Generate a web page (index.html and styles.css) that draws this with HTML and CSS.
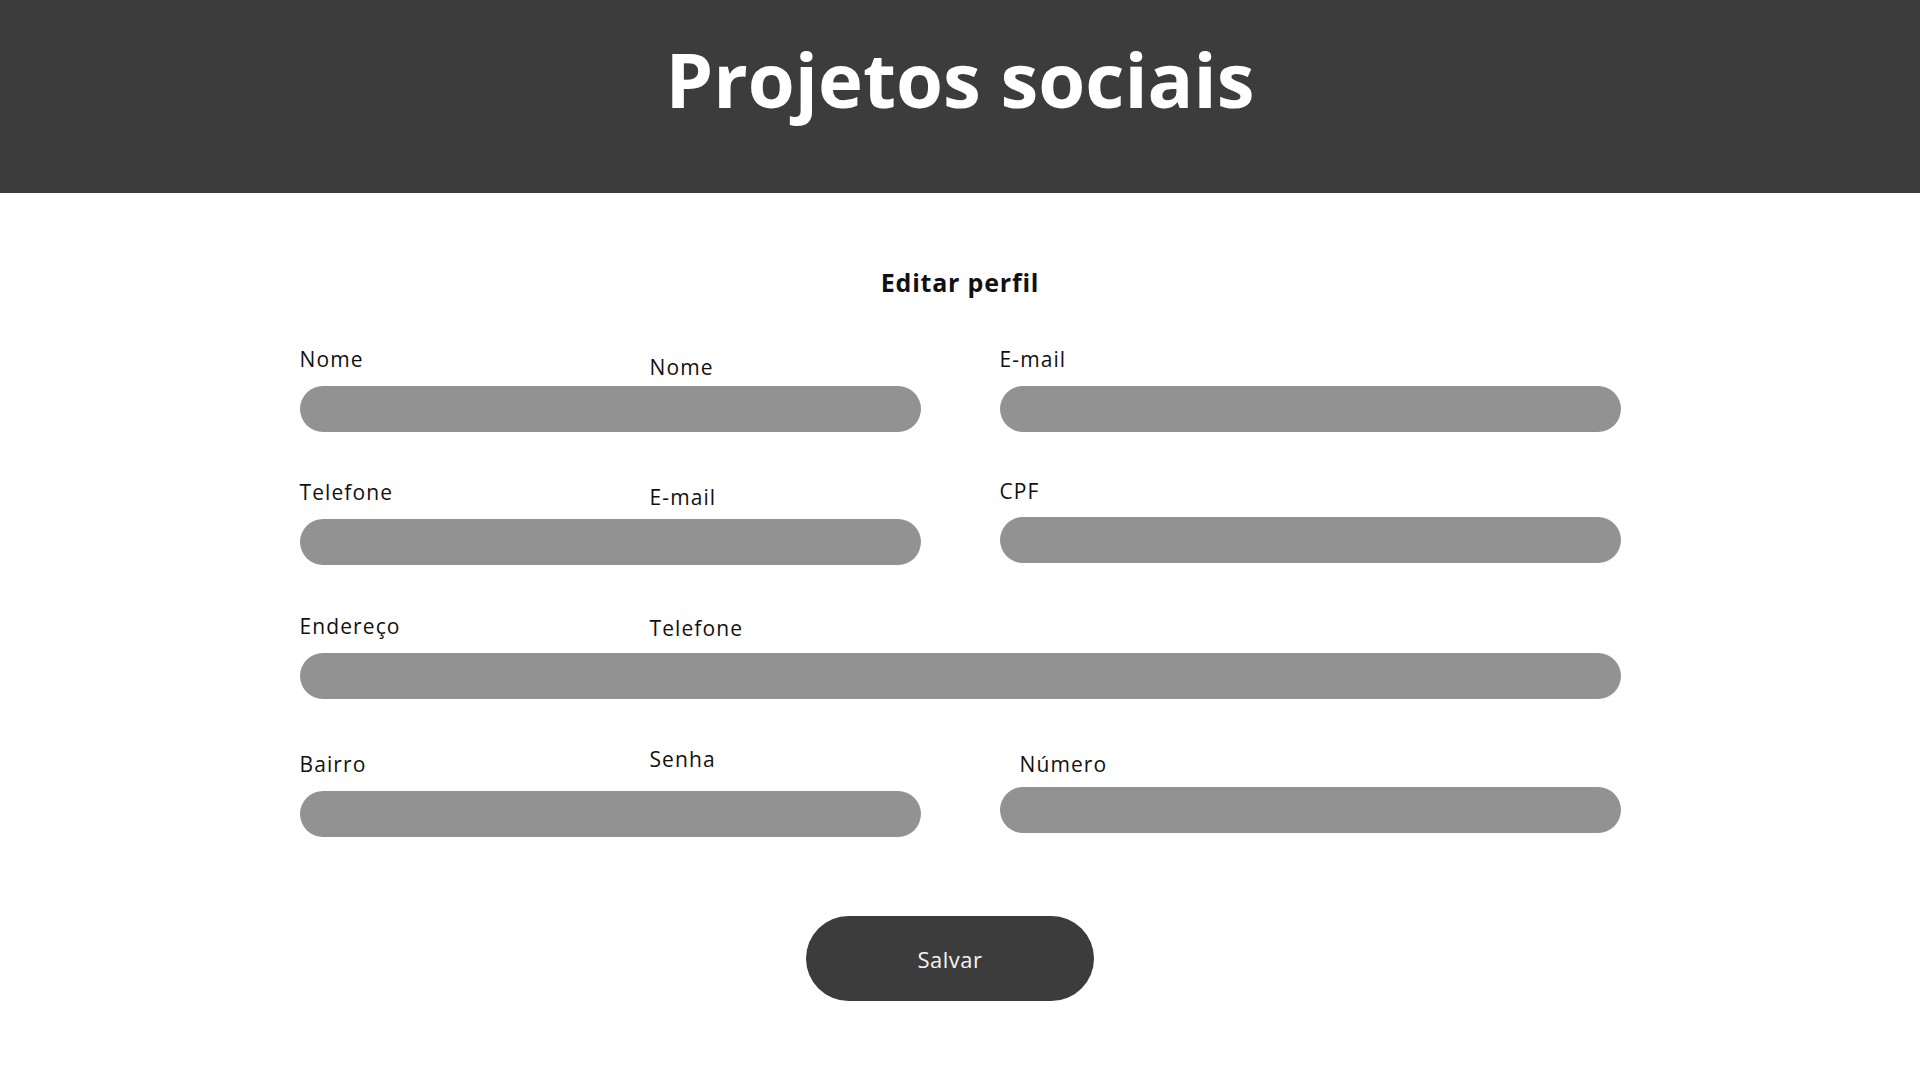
FILE: index.html
```html
<!DOCTYPE html>
<html lang="pt-BR">
<head>
<meta charset="utf-8">
<title>Projetos sociais - Editar perfil</title>
<link rel="stylesheet" href="styles.css">
</head>
<body>
<header class="topbar">
  <h1 class="brand">Projetos sociais</h1>
</header>
<main class="page">
  <h2 class="page-title">Editar perfil</h2>
  <form class="profile-form">
    <div class="field">
      <label class="field-label">Nome</label>
      <div class="field-input"></div>
    </div>
    <div class="field">
      <label class="field-label">E-mail</label>
      <div class="field-input"></div>
    </div>
    <div class="field field--second">
      <label class="field-label">Telefone</label>
      <div class="field-input field-input--gap13"></div>
    </div>
    <div class="field field--cpf">
      <label class="field-label">CPF</label>
      <div class="field-input field-input--gap12"></div>
    </div>
    <div class="field field--wide">
      <label class="field-label">Endereço</label>
      <div class="field-input"></div>
    </div>
    <div class="field field--last">
      <label class="field-label">Bairro</label>
      <div class="field-input"></div>
    </div>
    <div class="field field--last">
      <label class="field-label field-label--indent">Número</label>
      <div class="field-input field-input--gap9"></div>
    </div>

    <span class="ghost ghost--nome">Nome</span>
    <span class="ghost ghost--email">E-mail</span>
    <span class="ghost ghost--telefone">Telefone</span>
    <span class="ghost ghost--senha">Senha</span>
  </form>
  <div class="actions">
    <button type="button" class="save-btn">Salvar</button>
  </div>
</main>
</body>
</html>
```
FILE: styles.css
```css
* { box-sizing: border-box; }

html, body {
  margin: 0;
  padding: 0;
  background: #ffffff;
  font-family: "Open Sans", "Noto Sans", "Liberation Sans", sans-serif;
  color: #111111;
}

.topbar {
  height: 193px;
  background: #3c3c3c;
  display: flex;
  justify-content: center;
}

.brand {
  margin: 0;
  padding-top: 27px;
  font-size: 76px;
  font-weight: 700;
  line-height: 104px;
  color: #ffffff;
}

.page {
  width: 1321px;
  margin: 0 auto;
  padding-top: 73px;
}

.page-title {
  margin: 0;
  text-align: center;
  font-size: 25px;
  font-weight: 700;
  letter-spacing: 0.8px;
  line-height: 33px;
  color: #111111;
}

.profile-form {
  position: relative;
  margin-top: 46px;
  display: grid;
  grid-template-columns: 621px 621px;
  column-gap: 79px;
  row-gap: 45px;
}

.field {
  display: flex;
  flex-direction: column;
}

.field--second { margin-top: 1px; }
.field--wide { grid-column: 1 / span 2; margin-top: 2px; }
.field--cpf { margin-top: 0; }
.field--last { padding-top: 6px; }

.field-label {
  font-size: 21px;
  letter-spacing: 1.1px;
  line-height: 28px;
  height: 28px;
  color: #111111;
}

.field-label--indent { padding-left: 20px; }

.field-input {
  margin-top: 13px;
  height: 46px;
  border-radius: 23px;
  background: #929292;
}

.field-input--gap13 { margin-top: 13px; }
.field-input--gap12 { margin-top: 12px; }
.field-input--gap9 { margin-top: 9px; }

.ghost {
  position: absolute;
  left: 350px;
  font-size: 21px;
  letter-spacing: 1.1px;
  line-height: 28px;
  color: #111111;
}

.ghost--nome { top: 8px; }
.ghost--email { top: 138px; }
.ghost--telefone { top: 269px; }
.ghost--senha { top: 400px; }

.actions {
  display: flex;
  justify-content: center;
  padding-right: 20px;
  margin-top: 79px;
}

.save-btn {
  width: 288px;
  height: 85px;
  border: none;
  border-radius: 43px;
  background: #3c3c3c;
  color: #f4f4f4;
  font-family: "Open Sans", "Noto Sans", sans-serif;
  font-size: 22px;
  letter-spacing: 0.5px;
  padding: 0;
}
```
